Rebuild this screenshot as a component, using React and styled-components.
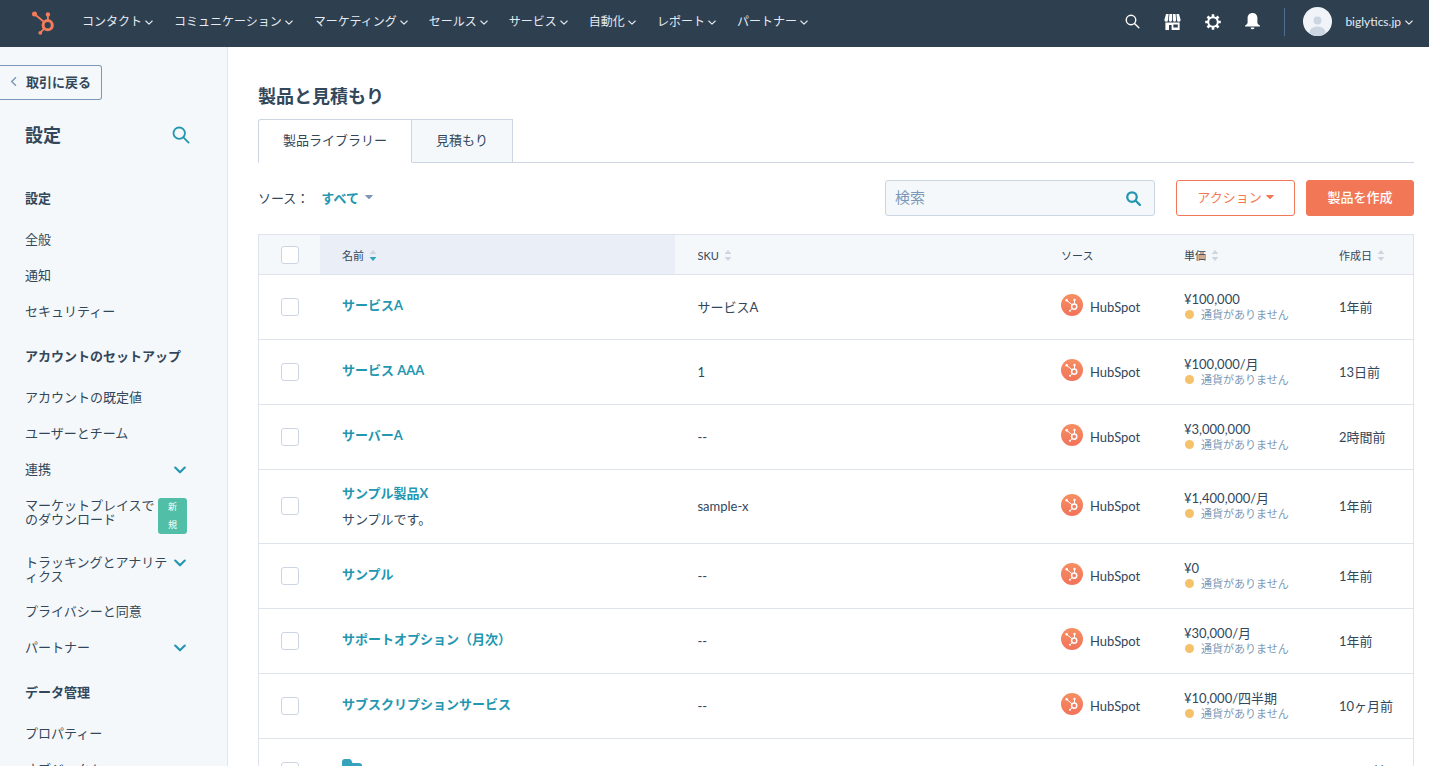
import React, { useState } from 'react'
import styled, { createGlobalStyle } from 'styled-components'

const GlobalStyle = createGlobalStyle`
  *, *::before, *::after {
    box-sizing: border-box;
  }

  body {
    margin: 0;
    height: 100vh;
    overflow: hidden;
    background: #fff;
    color: #33475b;
    font-family: Lato, "Noto Sans CJK JP", sans-serif;
    font-size: 13px;
    line-height: 20px;
  }

  button, input {
    font-family: inherit;
    color: inherit;
  }

  button {
    cursor: pointer;
  }

  a {
    color: inherit;
    text-decoration: none;
  }
`;

const Page = styled.div`
  display: flex;
  flex-direction: column;
  height: 100vh;
`;

const TopBar = styled.header`
  display: flex;
  align-items: center;
  flex: none;
  height: 47px;
  padding: 0 16px 4px 32px;
  background: #2e3f50;
  color: #e5ebf1;
`;

const LogoLink = styled.a`
  display: flex;
  width: 50px;
  padding-top: 3px;
  color: #f47c5a;
`;

const MainNav = styled.nav`
  display: flex;
  gap: 21px;
  flex: 1;
`;

const NavButton = styled.button`
  display: flex;
  align-items: center;
  gap: 3px;
  padding: 0;
  border: 0;
  background: none;
  font-size: 12px;
  line-height: 20px;
  white-space: nowrap;
`;

const Tools = styled.div`
  display: flex;
  align-items: center;
  gap: 24px;
`;

const ToolButton = styled.button`
  display: flex;
  padding: 0;
  border: 0;
  background: none;
  color: #fff;
`;

const AccountButton = styled(NavButton)`
  gap: 4px;
  height: 28px;
  padding-left: 18px;
  border-left: 1px solid #516f90;
`;

const Avatar = styled.svg`
  width: 29px;
  height: 29px;
  margin-right: 9px;
`;

const Body = styled.div`
  display: flex;
  flex: 1;
  min-height: 0;
`;

const Sidebar = styled.aside`
  flex: none;
  width: 228px;
  overflow: hidden;
  padding-top: 18px;
  border-right: 1px solid #dfe6ee;
  background: #f5f8fa;
`;

const BackButton = styled.button`
  display: flex;
  align-items: center;
  gap: 8px;
  height: 35px;
  padding: 0 10px 3px 9px;
  border: 1px solid #7c98b6;
  border-left: 0;
  border-radius: 0 3px 3px 0;
  background: none;
  font-size: 13px;
  font-weight: 700;

  svg {
    color: #7c98b6;
  }
`;

const SidebarHead = styled.div`
  display: flex;
  align-items: center;
  justify-content: space-between;
  padding: 22px 37px 0 25px;

  h2 {
    margin: 0;
    font-size: 18px;
    font-weight: 700;
    line-height: 26px;
  }

  button {
    color: #2396b0;
  }
`;

const Sections = styled.nav`
  margin-top: 43px;
`;

const Section = styled.section`
  padding: 0 36px 0 25px;
  margin-bottom: 30px;
  line-height: 14px;

  h3 {
    margin: 0 0 27px;
    font-size: 13px;
    font-weight: 700;
    line-height: 14px;
  }

  ul {
    display: flex;
    flex-direction: column;
    gap: 21px;
    margin: 0;
    padding: 0;
    list-style: none;
  }
`;

const MenuItem = styled.li`
  display: flex;
  align-items: flex-start;
  justify-content: space-between;
  min-height: 15px;
  padding-right: ${(props) => (props.$badge ? '4px' : '5px')};

  a {
    flex: 0 1 auto;
    max-width: ${(props) => (props.$badge ? '130px' : '144px')};
  }
`;

const MenuArrow = styled(ToolButton)`
  padding-top: 1px;
  color: #2396b0;
`;

const NewBadge = styled.span`
  width: 29px;
  padding: 0 8px;
  border-radius: 3px;
  background: #51bfa7;
  color: #fff;
  font-size: 9px;
  line-height: 18px;
  text-align: center;
  word-break: break-all;
`;

const Main = styled.main`
  flex: 1;
  min-width: 0;
  overflow: hidden;
  padding: 36px 15px 0 30px;

  h1 {
    margin: 0 0 10px;
    font-size: 18px;
    font-weight: 700;
    line-height: 26px;
  }
`;

const Tabs = styled.div`
  display: flex;
  border-bottom: 1px solid #cbd6e2;
`;

const Tab = styled.button`
  height: 44px;
  margin-bottom: -1px;
  padding: 0 24px 4px;
  border: 1px solid #cbd6e2;
  border-bottom-color: ${(props) => (props.$active ? '#fff' : '#cbd6e2')};
  border-radius: ${(props) => (props.$active ? '3px 0 0 0' : '0')};
  background: ${(props) => (props.$active ? '#fff' : '#f5f8fa')};
  font-size: 13px;

  & + & {
    border-left: 0;
  }
`;

const Toolbar = styled.div`
  display: flex;
  align-items: center;
  padding: 17px 0 18px;
`;

const FilterButton = styled.button`
  display: flex;
  align-items: center;
  gap: 6px;
  margin: 0 auto 0 12px;
  padding: 0 0 2px;
  border: 0;
  background: none;
  color: #2396b0;
  font-size: 13px;
  font-weight: 700;
`;

const SearchBox = styled.form`
  display: flex;
  align-items: center;
  width: 270px;
  height: 36px;
  margin-right: 21px;
  padding: 0 13px 0 9px;
  border: 1px solid #cbd6e2;
  border-radius: 3px;
  background: #f5f8fa;

  input {
    flex: 1;
    min-width: 0;
    padding: 0 0 3px;
    border: 0;
    outline: 0;
    background: none;
    font-size: 15px;
  }

  input::placeholder {
    color: #7c98b6;
    opacity: 1;
  }

  button {
    color: #2396b0;
  }
`;

const ActionButton = styled.button`
  display: flex;
  align-items: center;
  justify-content: center;
  gap: 4px;
  height: 36px;
  min-width: ${(props) => (props.$primary ? '108px' : '119px')};
  margin-left: ${(props) => (props.$primary ? '11px' : '0')};
  padding: 0 16px 3px;
  border: 1px solid #f27757;
  border-radius: 3px;
  background: ${(props) => (props.$primary ? '#f27757' : '#fff')};
  color: ${(props) => (props.$primary ? '#fff' : '#f27757')};
  font-size: 13px;
  font-weight: ${(props) => (props.$primary ? 500 : 400)};
`;

const Table = styled.table`
  width: 100%;
  table-layout: fixed;
  border: 1px solid #dfe3eb;
  border-spacing: 0;

  th, td {
    text-align: left;
    vertical-align: middle;
  }

  th {
    height: 40px;
    padding: 0 0 0 22px;
    border-bottom: 1px solid #dfe3eb;
    background: #f5f8fa;
    font-size: 11px;
    font-weight: 400;
  }

  th[aria-sort] {
    background: #eaeef6;
  }

  td {
    height: 65px;
    padding: 12px 0 13px 22px;
    border-bottom: 1px solid #dfe3eb;
  }
`;

const Col = styled.col`
  width: ${(props) => props.$width};
`;

const HeadLabel = styled.span`
  display: flex;
  align-items: center;
  gap: 5px;
  padding-top: 2px;
`;

const CheckBox = styled.input`
  display: block;
  appearance: none;
  width: 18px;
  height: 18px;
  margin: 0;
  border: 1px solid #cbd6e2;
  border-radius: 3px;
  background: #fff;

  &:checked {
    background: #2396b0;
  }
`;

const ProductName = styled.a`
  display: block;
  margin-bottom: 4px;
  color: #2396b0;
  font-weight: 700;
  line-height: 22px;
`;

const Description = styled.div`
  line-height: 22px;
`;

const Source = styled.div`
  display: flex;
  align-items: center;
  gap: 7px;

  svg {
    margin-bottom: 3px;
  }
`;

const Price = styled.div`
  line-height: 15px;
`;

const Currency = styled.div`
  display: flex;
  align-items: center;
  gap: 7px;
  color: #7c98b6;
  font-size: 11px;
  line-height: 15px;

  &::before {
    content: "";
    width: 9px;
    height: 9px;
    margin-left: 1px;
    border-radius: 50%;
    background: #f5c26b;
  }
`;

const Chevron = ({ size = 8, width = 1.1, left }) => (
  <svg width={size} height={size} viewBox="0 0 8 8" fill="none" stroke="currentColor" strokeWidth={width} strokeLinecap="round" strokeLinejoin="round">
    <path d={left ? 'M5.8.6 2.4 4l3.4 3.4' : 'M.8 3 4 6.2 7.2 3'} />
  </svg>
)

const Caret = ({ color = 'currentColor' }) => (
  <svg width="8" height="4" viewBox="0 0 8 4" fill={color}>
    <path d="M.6 0h6.8q.6.2.2.7L4.6 3.7q-.6.5-1.2 0L.4.7Q0 .2.6 0Z" />
  </svg>
)

const SortArrows = ({ active }) => (
  <svg width="8" height="14" viewBox="0 0 8 14">
    <path d="M4 1 7.4 5H.6Z" fill="#cbd6e2" />
    <path d="M.6 8h6.8L4 12Z" fill={active ? '#2ba3bb' : '#cbd6e2'} />
  </svg>
)

const SearchIcon = ({ size, width }) => (
  <svg width={size} height={size} viewBox="0 0 18 18" fill="none" stroke="currentColor" strokeWidth={width} strokeLinecap="round">
    <circle cx="7.2" cy="7.2" r="5.7" />
    <path d="m11.4 11.4 5.2 5.2" />
  </svg>
)

const LogoMark = () => (
  <svg width="24" height="24" viewBox="0.7 0 24 24" fill="none" stroke="currentColor">
    <circle cx="16.4" cy="14.2" r="4.6" strokeWidth="3" />
    <path d="M16.6 9V4M12.8 11 4 3.8M13 17.6l-3.6 3.6" strokeWidth="1.8" />
    <g fill="currentColor" stroke="none">
      <circle cx="16.6" cy="3.4" r="2.2" />
      <circle cx="3.2" cy="2.9" r="2.5" />
      <circle cx="9" cy="21.8" r="1.9" />
    </g>
  </svg>
)

const SourceIcon = () => (
  <svg width="22" height="22" viewBox="0 0 22 22" fill="none" stroke="#fff">
    <defs>
      <linearGradient id="source-fill" x1="0" y1="0" x2="0" y2="1">
        <stop offset="0" stopColor="#f68f62" />
        <stop offset="1" stopColor="#f2735a" />
      </linearGradient>
    </defs>
    <circle cx="11" cy="11" r="11" fill="url(#source-fill)" stroke="none" />
    <circle cx="13.2" cy="12.6" r="2.6" strokeWidth="1.5" />
    <path d="M13.5 9.8V6M11.1 10.8 6 6.600M11.300 14.500l-2 2" strokeWidth="1" />
    <g fill="#fff" stroke="none">
      <circle cx="13.500" cy="6" r="1.200" />
      <circle cx="5.700" cy="6.300" r="1.300" />
      <circle cx="9" cy="16.800" r="1" />
    </g>
  </svg>
)

const StoreIcon = () => (
  <svg width="17" height="16" viewBox="0 0 17 16" fill="#fff">
    <path d="M2 0h2.6L4 6.2a1.6 1.6 0 0 1-3.6-.4ZM5.4 0h2.7v6a1.6 1.6 0 0 1-3.3 0ZM8.900 0h2.700l.6 6a1.600 1.600 0 0 1-3.300 0ZM12.400 0H15l1.600 5.800a1.600 1.600 0 0 1-3.600.4Z" />
    <path fillRule="evenodd" d="M1.400 8.600h14.200V16H1.400ZM5 11v5h2.600v-5ZM9.400 10.400v3.200h4.400v-3.200Z" />
  </svg>
)

const GearIcon = () => (
  <svg width="16" height="16" viewBox="0 0 16 16" fill="none" stroke="#fff">
    <circle cx="8" cy="8" r="4.8" strokeWidth="2" />
    <path d="M8 .2v3M8 12.800v3M.2 8h3M12.800 8h3M2.500 2.500l2 2M11.500 11.500l2 2M2.500 13.500l2-2M11.500 4.500l2-2" strokeWidth="2.600" />
  </svg>
)

const BellIcon = () => (
  <svg width="15" height="17" viewBox="0 0 15 17" fill="#fff">
    <path d="M7.500 0C10.600 0 12.400 2.200 12.400 5v4.600c0 1.300.8 2 2.200 2.700.6.400.4 1.200-.3 1.200H.7c-.7 0-.9-.8-.3-1.200 1.400-.7 2.200-1.400 2.200-2.700V5C2.600 2.200 4.400 0 7.500 0Z" />
    <path d="M5.600 14.400h3.800a1.900 1.900 0 0 1-3.800 0Z" />
  </svg>
)

const FolderIcon = () => (
  <svg width="20" height="18" viewBox="0 0 20 18" fill="#36a2bb">
    <path d="M0 3C0 1 1 0 3 0h4c2 0 3 2 3.400 4H17c2 0 3 1 3 2.500V15c0 2-1 3-3 3H3c-2 0-3-1-3-3Z" />
  </svg>
)

const navItems = ['コンタクト', 'コミュニケーション', 'マーケティング', 'セールス', 'サービス', '自動化', 'レポート', 'パートナー'];

const sections = [
  { title: '設定', items: [{ label: '全般' }, { label: '通知' }, { label: 'セキュリティー' }] },
  {
    title: 'アカウントのセットアップ',
    items: [
      { label: 'アカウントの既定値' },
      { label: 'ユーザーとチーム' },
      { label: '連携', expandable: true },
      { label: 'マーケットプレイスでのダウンロード', badge: '新規' },
      { label: 'トラッキングとアナリティクス', expandable: true },
      { label: 'プライバシーと同意' },
      { label: 'パートナー', expandable: true },
    ],
  },
  { title: 'データ管理', items: [{ label: 'プロパティー' }, { label: 'オブジェクト', expandable: true }] },
];

const products = [
  { id: 1, name: 'サービスA', sku: 'サービスA', price: '¥100,000', created: '1年前' },
  { id: 2, name: 'サービス AAA', sku: '1', price: '¥100,000/月', created: '13日前' },
  { id: 3, name: 'サーバーA', sku: '--', price: '¥3,000,000', created: '2時間前' },
  { id: 4, name: 'サンプル製品X', description: 'サンプルです。', sku: 'sample-x', price: '¥1,400,000/月', created: '1年前' },
  { id: 5, name: 'サンプル', sku: '--', price: '¥0', created: '1年前' },
  { id: 6, name: 'サポートオプション（月次）', sku: '--', price: '¥30,000/月', created: '1年前' },
  { id: 7, name: 'サブスクリプションサービス', sku: '--', price: '¥10,000/四半期', created: '10ヶ月前' },
  { id: 8, folder: true, created: '5ヶ月前' },
];

function ProductRow({ product }) {
  const { name, description, sku, price, created, folder } = product;

  return (
    <tr>
      <td><CheckBox type="checkbox" aria-label={name || 'フォルダー'} /></td>
      <td>
        {folder ? <FolderIcon /> : <ProductName href="#">{name}</ProductName>}
        {description && <Description>{description}</Description>}
      </td>
      <td>{sku}</td>
      <td>{!folder && <Source><SourceIcon />HubSpot</Source>}</td>
      <td>
        {price && (
          <>
            <Price>{price}</Price>
            <Currency>通貨がありません</Currency>
          </>
        )}
      </td>
      <td>{created}</td>
    </tr>
  )
}

function App() {
  const [search, setSearch] = useState('');
  const [tab, setTab] = useState(0);

  return (
    <>
      <GlobalStyle />
      <Page>
        <TopBar>
          <LogoLink href="#" aria-label="HubSpot">
            <LogoMark />
          </LogoLink>
          <MainNav>
            {navItems.map((item) => (
              <NavButton key={item}>{item}<Chevron /></NavButton>
            ))}
          </MainNav>
          <Tools>
            <ToolButton aria-label="検索"><SearchIcon size={15} width={1.7} /></ToolButton>
            <ToolButton aria-label="マーケットプレイス"><StoreIcon /></ToolButton>
            <ToolButton aria-label="設定"><GearIcon /></ToolButton>
            <ToolButton aria-label="通知"><BellIcon /></ToolButton>
            <AccountButton>
              <Avatar viewBox="0 0 29 29">
                <circle cx="14.5" cy="14.5" r="14.5" fill="#f0f4f8" />
                <circle cx="14.5" cy="13.5" r="4" fill="#cbd6e2" />
                <path d="M6.5 26.5c0-5 3.5-7 8-7s8 2 8 7a14.5 14.5 0 0 1-16 0Z" fill="#cbd6e2" />
              </Avatar>
              biglytics.jp
              <Chevron />
            </AccountButton>
          </Tools>
        </TopBar>
        <Body>
          <Sidebar>
            <BackButton><Chevron left size={9} width={1.3} />取引に戻る</BackButton>
            <SidebarHead>
              <h2>設定</h2>
              <ToolButton aria-label="設定を検索"><SearchIcon size={18} width={1.8} /></ToolButton>
            </SidebarHead>
            <Sections>
              {sections.map((section) => (
                <Section key={section.title}>
                  <h3>{section.title}</h3>
                  <ul>
                    {section.items.map((item) => (
                      <MenuItem key={item.label} $badge={item.badge}>
                        <a href="#">{item.label}</a>
                        {item.badge && <NewBadge>{item.badge}</NewBadge>}
                        {item.expandable && <MenuArrow aria-label="展開"><Chevron size={12} width={1.4} /></MenuArrow>}
                      </MenuItem>
                    ))}
                  </ul>
                </Section>
              ))}
            </Sections>
          </Sidebar>
          <Main>
            <h1>製品と見積もり</h1>
            <Tabs role="tablist">
              {['製品ライブラリー', '見積もり'].map((label, i) => (
                <Tab key={label} role="tab" aria-selected={tab === i} $active={tab === i} onClick={() => setTab(i)}>{label}</Tab>
              ))}
            </Tabs>
            <Toolbar>
              <span>ソース：</span>
              <FilterButton>すべて<Caret color="#7c98b6" /></FilterButton>
              <SearchBox onSubmit={(e) => e.preventDefault()}>
                <input aria-label="検索" placeholder="検索" value={search} onChange={(e) => setSearch(e.target.value)} />
                <ToolButton aria-label="検索する"><SearchIcon size={15} width={2.7} /></ToolButton>
              </SearchBox>
              <ActionButton>アクション<Caret /></ActionButton>
              <ActionButton $primary>製品を作成</ActionButton>
            </Toolbar>
            <Table>
              <colgroup>
                <Col $width="61px" />
                <Col $width="30.8%" />
                <Col />
                <Col $width="123px" />
                <Col $width="155px" />
                <Col $width="96px" />
              </colgroup>
              <thead>
                <tr>
                  <th><CheckBox type="checkbox" aria-label="すべて選択" /></th>
                  <th aria-sort="descending"><HeadLabel>名前<SortArrows active /></HeadLabel></th>
                  <th><HeadLabel>SKU<SortArrows /></HeadLabel></th>
                  <th><HeadLabel>ソース</HeadLabel></th>
                  <th><HeadLabel>単価<SortArrows /></HeadLabel></th>
                  <th><HeadLabel>作成日<SortArrows /></HeadLabel></th>
                </tr>
              </thead>
              <tbody>
                {products.map((product) => (
                  <ProductRow key={product.id} product={product} />
                ))}
              </tbody>
            </Table>
          </Main>
        </Body>
      </Page>
    </>
  )
}

export default App
